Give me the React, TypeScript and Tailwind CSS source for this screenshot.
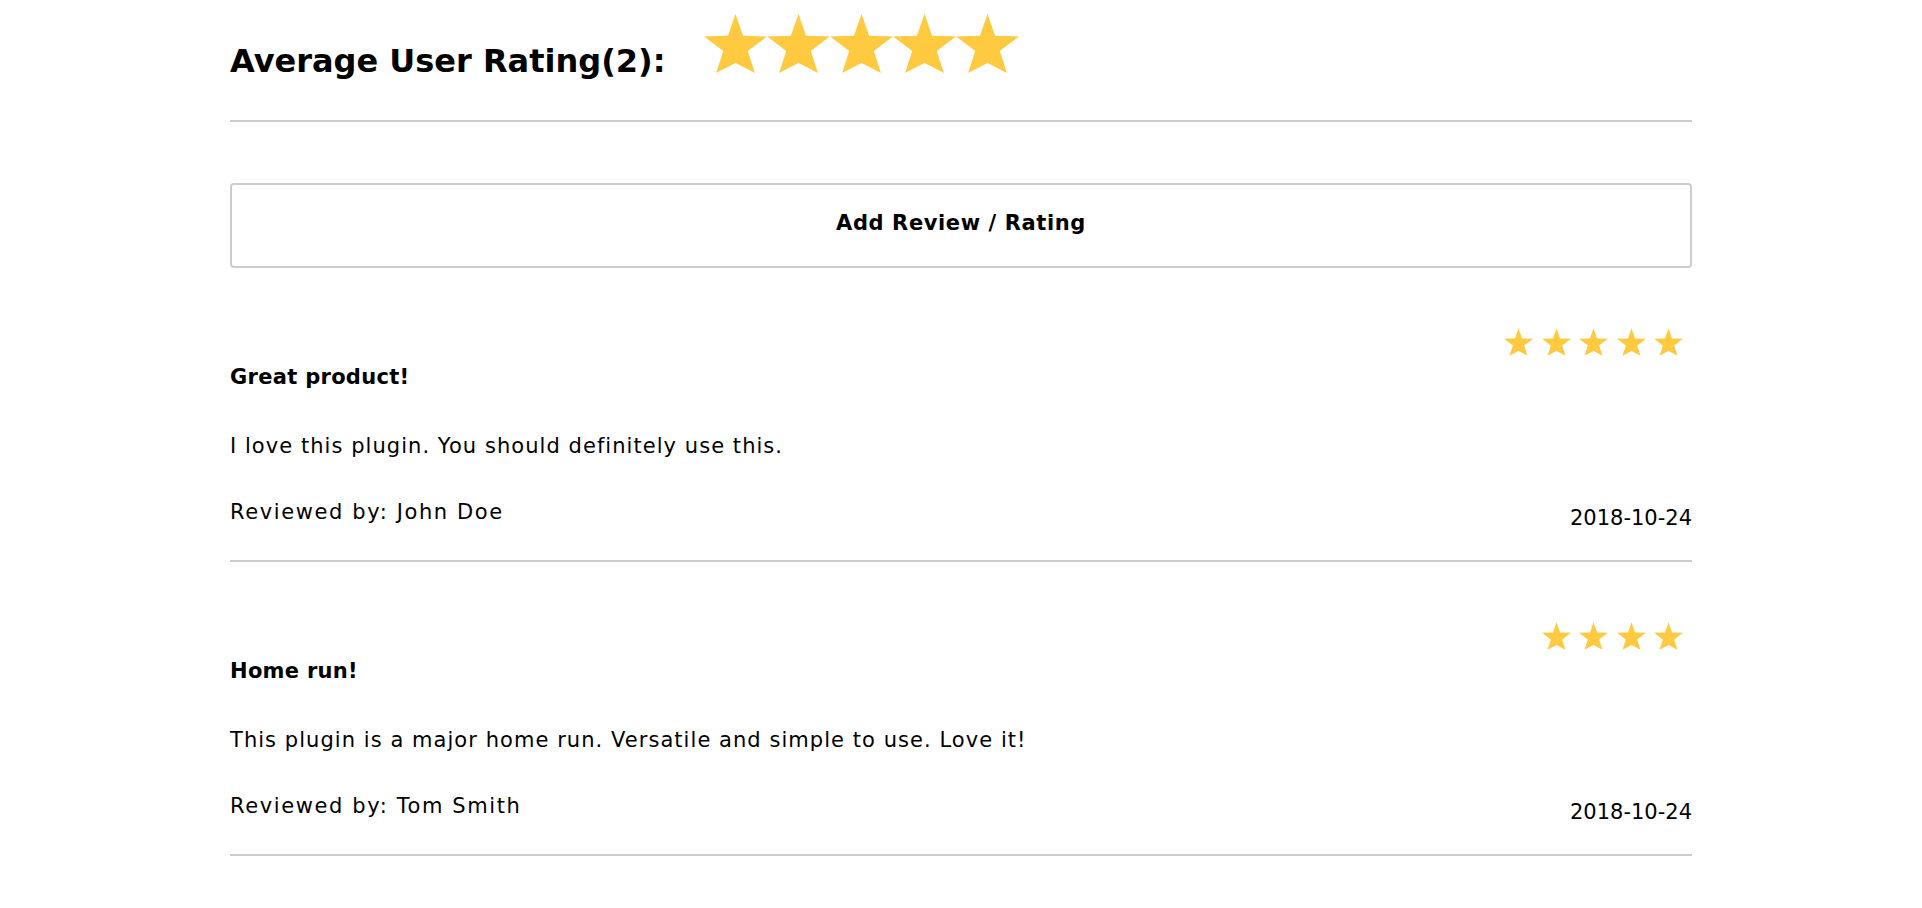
import React from "react";

const Star = ({ className }: { className?: string }) => (
  <svg viewBox="0 0 100 94" className={className} aria-hidden="true">
    <polygon
      fill="#ffc940"
      points="50,0 62,34.5 100,36 69.5,59 81,94 50,78 19,94 30.5,59 0,36 38,34.5"
    />
  </svg>
);

type Review = {
  rating: number;
  title: string;
  body: string;
  author: string;
  date: string;
};

const reviews: Review[] = [
  {
    rating: 5,
    title: "Great product!",
    body: "I love this plugin. You should definitely use this.",
    author: "John Doe",
    date: "2018-10-24",
  },
  {
    rating: 4,
    title: "Home run!",
    body: "This plugin is a major home run. Versatile and simple to use. Love it!",
    author: "Tom Smith",
    date: "2018-10-24",
  },
];

function ReviewItem({ review }: { review: Review }) {
  return (
    <div className="border-b-2 border-[#cccccc]">
      <div className="mt-[60px] flex justify-end gap-[8.5px] pr-[9px]">
        {Array.from({ length: review.rating }).map((_, i) => (
          <Star key={i} className="h-[28px] w-[29px]" />
        ))}
      </div>
      <h4 className="mt-[9px] text-[21px] leading-[24px] font-bold tracking-[0.3px]">
        {review.title}
      </h4>
      <p className="mt-[45px] text-[21px] leading-[24px] tracking-[1.05px]">{review.body}</p>
      <div className="mt-[42px] mb-[30px] flex items-start justify-between text-[21px] leading-[24px]">
        <span className="tracking-[1.6px]">Reviewed by: {review.author}</span>
        <span className="mt-[6px]">{review.date}</span>
      </div>
    </div>
  );
}

export default function App() {
  return (
    <div className="min-h-screen bg-white text-black font-['DejaVu_Sans',sans-serif]">
      <div className="mx-auto w-[1462px] pt-[14px]">
        <div className="flex items-start border-b-2 border-[#cccccc] pb-[43px]">
          <h2 className="mt-[31px] text-[32px] leading-[32px] font-bold">
            Average User Rating(2):
          </h2>
          <div className="ml-[39px] flex">
            {Array.from({ length: 5 }).map((_, i) => (
              <Star key={i} className="h-[59px] w-[63px]" />
            ))}
          </div>
        </div>
        <button className="mt-[61px] flex h-[85px] w-full items-center justify-center rounded-[4px] border-2 border-[#cccccc] bg-white pb-[3px] text-[21px] font-bold tracking-[0.6px]">
          Add Review / Rating
        </button>
        {reviews.map((r, i) => (
          <ReviewItem key={i} review={r} />
        ))}
      </div>
    </div>
  );
}
